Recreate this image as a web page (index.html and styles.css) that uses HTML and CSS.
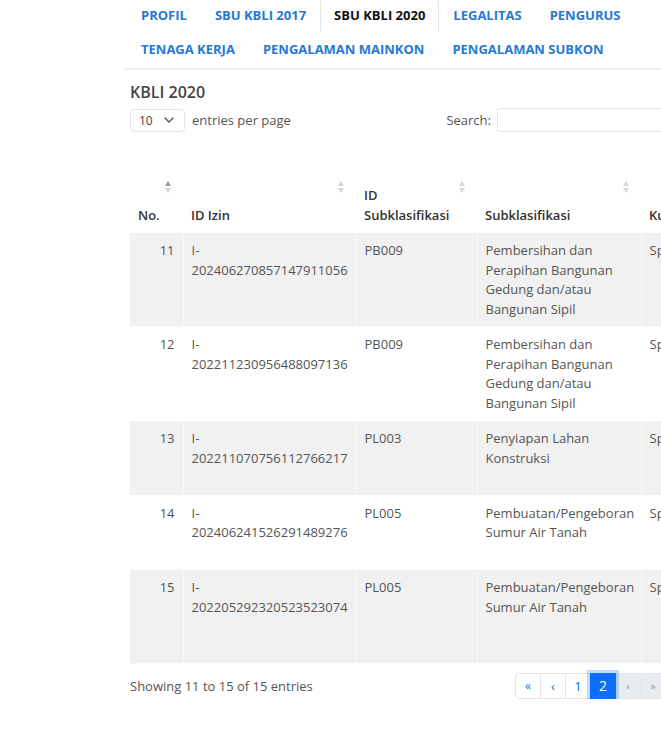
FILE: index.html
```html
<!DOCTYPE html>
<html lang="id">
<head>
  <meta charset="UTF-8" />
  <meta name="viewport" content="width=device-width, initial-scale=1.0"/>
  <title>Detail Badan Usaha - SBU KBLI 2020</title>
  <link rel="stylesheet" href="styles.css">
</head>
<body>
  <main class="main">
    <nav class="nav-tabs">
      <a class="nav-link" href="#">PROFIL</a>
      <a class="nav-link" href="#">SBU KBLI 2017</a>
      <a class="nav-link active" href="#">SBU KBLI 2020</a>
      <a class="nav-link" href="#">LEGALITAS</a>
      <a class="nav-link" href="#">PENGURUS</a>
      <a class="nav-link" href="#">TENAGA KERJA</a>
      <a class="nav-link" href="#">PENGALAMAN MAINKON</a>
      <a class="nav-link" href="#">PENGALAMAN SUBKON</a>
    </nav>

    <section class="tab-content">
      <h2 class="section-title">KBLI 2020</h2>

      <div class="dt-top">
        <div class="dt-length">
          <div class="select">
            <span>10</span>
            <svg width="10" height="6" viewBox="0 0 10 6"><path d="M1 1l4 4 4-4" fill="none" stroke="#555" stroke-width="1.4" stroke-linecap="round" stroke-linejoin="round"/></svg>
          </div>
          <span>entries per page</span>
        </div>
        <div class="dt-search">
          <label for="search">Search:</label>
          <input type="search" id="search">
        </div>
      </div>

      <table class="dt-table">
        <colgroup>
          <col style="width:53px">
          <col style="width:173px">
          <col style="width:121px">
          <col style="width:164px">
          <col style="width:120px">
          <col style="width:200px">
        </colgroup>
        <thead>
          <tr>
            <th>No.<span class="order asc"></span></th>
            <th>ID Izin<span class="order"></span></th>
            <th>ID Subklasifikasi<span class="order"></span></th>
            <th>Subklasifikasi<span class="order"></span></th>
            <th>Kualifikasi<span class="order"></span></th>
            <th>Keterangan<span class="order"></span></th>
          </tr>
        </thead>
        <tbody>
          <tr class="odd">
            <td class="num">11</td>
            <td>I-202406270857147911056</td>
            <td>PB009</td>
            <td>Pembersihan dan Perapihan Bangunan Gedung dan/atau Bangunan Sipil</td>
            <td>Spesialis 1</td>
            <td>Berlaku</td>
          </tr>
          <tr>
            <td class="num">12</td>
            <td>I-202211230956488097136</td>
            <td>PB009</td>
            <td>Pembersihan dan Perapihan Bangunan Gedung dan/atau Bangunan Sipil</td>
            <td>Spesialis 1</td>
            <td>Berlaku</td>
          </tr>
          <tr class="odd">
            <td class="num">13</td>
            <td>I-202211070756112766217</td>
            <td>PL003</td>
            <td>Penyiapan Lahan Konstruksi</td>
            <td>Spesialis 1</td>
            <td>Berlaku<br>Terverifikasi<br>LPJK</td>
          </tr>
          <tr>
            <td class="num">14</td>
            <td>I-202406241526291489276</td>
            <td>PL005</td>
            <td>Pembuatan/Pengeboran Sumur Air Tanah</td>
            <td>Spesialis 1</td>
            <td>Berlaku<br>Terverifikasi<br>LPJK</td>
          </tr>
          <tr class="odd">
            <td class="num">15</td>
            <td>I-202205292320523523074</td>
            <td>PL005</td>
            <td>Pembuatan/Pengeboran Sumur Air Tanah</td>
            <td>Spesialis 1</td>
            <td>Berlaku<br>Terverifikasi<br>LPJK<br>Perpanjangan</td>
          </tr>
        </tbody>
      </table>

      <div class="dt-bottom">
        <div class="dt-info">Showing 11 to 15 of 15 entries</div>
        <ul class="pagination">
          <li><a href="#">&laquo;</a></li>
          <li><a href="#">&lsaquo;</a></li>
          <li><a href="#">1</a></li>
          <li class="active"><a href="#">2</a></li>
          <li class="disabled"><a href="#">&rsaquo;</a></li>
          <li class="disabled"><a href="#">&raquo;</a></li>
        </ul>
      </div>
    </section>
  </main>
</body>
</html>
```

FILE: styles.css
```css
* {
  margin: 0;
  padding: 0;
  box-sizing: border-box;
  font-family: "Open Sans", "DejaVu Sans", sans-serif;
}

body {
  background-color: #fff;
  color: #555;
  font-size: 13px;
  overflow: hidden;
}

.main {
  margin-left: 124px;
  margin-top: -2px;
  width: 544px;
}

/* tabs */
.nav-tabs {
  display: flex;
  flex-wrap: wrap;
  padding-left: 3px;
  padding-bottom: 2px;
  border-bottom: 2px solid #eceef0;
}

.nav-link {
  display: block;
  padding: 6px 13px;
  line-height: 20px;
  font-size: 13px;
  font-weight: 700;
  color: #2479d4;
  text-decoration: none;
  border: 1px solid transparent;
  border-radius: 5px 5px 0 0;
}

.nav-link.active {
  color: #111;
  border-color: #e4e6e8 #e4e6e8 transparent;
}

/* content */
.tab-content {
  padding: 0 6px;
}

.section-title {
  margin-top: 10px;
  font-size: 16px;
  font-weight: 600;
  line-height: 24px;
  color: #444;
}

.dt-top {
  display: flex;
  justify-content: space-between;
  align-items: center;
  margin-top: 4px;
}

.dt-length {
  display: flex;
  align-items: center;
  gap: 7px;
}

.select {
  display: flex;
  align-items: center;
  justify-content: space-between;
  width: 55px;
  height: 23px;
  padding: 0 10px 0 8px;
  border: 1px solid #e3e5e8;
  border-radius: 4px;
  font-size: 12px;
  color: #444;
}

.dt-search {
  display: flex;
  align-items: center;
  gap: 6px;
  margin-right: -10px;
}

.dt-search input {
  width: 175px;
  height: 24px;
  border: 1px solid #e3e5e8;
  border-radius: 4px;
  outline: none;
}

/* table */
.dt-table {
  margin-top: 46px;
  width: 831px;
  table-layout: fixed;
  border-collapse: collapse;
  line-height: 19.5px;
}

.dt-table th {
  position: relative;
  text-align: left;
  vertical-align: bottom;
  padding: 8px 20px 8px 8px;
  font-weight: 600;
  color: #333;
}

.dt-table td {
  vertical-align: top;
  padding: 8px 8px 7px;
  border-right: 1px solid rgba(255, 255, 255, 0.55);
  border-bottom: 1px solid rgba(255, 255, 255, 0.55);
}

.dt-table td.num {
  text-align: right;
}

.dt-table tr.odd td {
  background-color: #f1f1f1;
}

.order {
  position: absolute;
  top: 3px;
  right: 11px;
  width: 7px;
  height: 12px;
}

.order::before,
.order::after {
  content: "";
  position: absolute;
  left: 0;
  border-left: 3.5px solid transparent;
  border-right: 3.5px solid transparent;
}

.order::before {
  top: 0;
  border-bottom: 5px solid #d6d6d6;
}

.order::after {
  bottom: 0;
  border-top: 5px solid #d6d6d6;
}

.order.asc::before {
  border-bottom-color: #9a9a9a;
}

/* bottom */
.dt-bottom {
  display: flex;
  justify-content: space-between;
  align-items: center;
  margin-top: 9px;
}

.pagination {
  display: flex;
  list-style: none;
  margin-right: -4px;
}

.pagination a {
  display: block;
  min-width: 26px;
  height: 26px;
  padding: 0 8px;
  line-height: 24px;
  text-align: center;
  font-size: 13px;
  color: #0d6efd;
  text-decoration: none;
  border: 1px solid #e3e5e8;
  margin-left: -1px;
  background: #fff;
}

.pagination li:first-child a {
  border-radius: 4px 0 0 4px;
  font-size: 12px;
}

.pagination li.active a {
  position: relative;
  z-index: 1;
  background-color: #0d6efd;
  border-color: #0d6efd;
  color: #fff;
  font-size: 14px;
  box-shadow: 0 0 0 3px rgba(13, 110, 253, 0.25);
}

.pagination li.disabled a {
  background-color: #e9ecef;
  color: #9aa0a6;
  font-size: 11px;
}
```
